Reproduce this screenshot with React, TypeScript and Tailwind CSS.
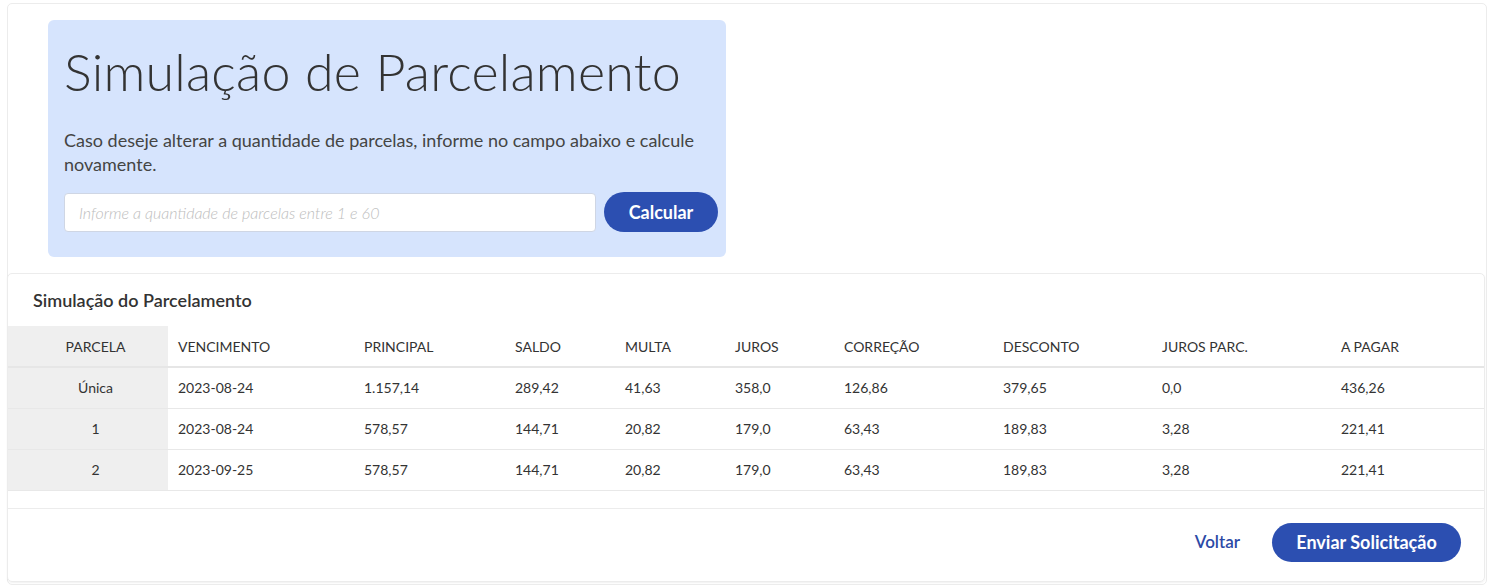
import React from 'react';

const rows = [
  ['Única', '2023-08-24', '1.157,14', '289,42', '41,63', '358,0', '126,86', '379,65', '0,0', '436,26'],
  ['1', '2023-08-24', '578,57', '144,71', '20,82', '179,0', '63,43', '189,83', '3,28', '221,41'],
  ['2', '2023-09-25', '578,57', '144,71', '20,82', '179,0', '63,43', '189,83', '3,28', '221,41'],
];

const heads = ['VENCIMENTO', 'PRINCIPAL', 'SALDO', 'MULTA', 'JUROS', 'CORREÇÃO', 'DESCONTO', 'JUROS PARC.', 'A PAGAR'];
const widths = ['w-[186px]', 'w-[151px]', 'w-[110px]', 'w-[110px]', 'w-[109px]', 'w-[159px]', 'w-[159px]', 'w-[179px]', 'w-[153px]'];

const App: React.FC = () => {
  return (
    <div className="min-h-screen bg-white text-[#333] font-['Lato',sans-serif] pt-[3px] pl-[7px]">
      <div className="w-[1480px] border border-[#ececec] rounded-[5px] pb-[2px]">
        <div className="pt-[16px] pl-[40px] pb-[16px]">
          <div className="w-[678px] h-[237px] bg-[#d6e4fd] rounded-[6px] pl-[16px] pr-[8px] pt-[20px]">
            <h1 className="text-[52px] font-light leading-[62px] tracking-[0.2px] text-[#333]">Simulação de Parcelamento</h1>
            <p className="mt-[26px] text-[18px] leading-[24px] text-[#444]">
              Caso deseje alterar a quantidade de parcelas, informe no campo abaixo e calcule novamente.
            </p>
            <div className="mt-[16px] flex items-center gap-[8px]">
              <input
                className="w-[532px] h-[39px] shrink-0 bg-white border border-[#cfd6e4] rounded-[4px] px-[14px] text-[16px] italic placeholder:text-[#bdbdbd] placeholder:font-light outline-none"
                placeholder="Informe a quantidade de parcelas entre 1 e 60"
              />
              <button className="w-[114px] h-[40px] shrink-0 rounded-full bg-[#2c4fb1] text-white text-[18px] font-bold">Calcular</button>
            </div>
          </div>
        </div>

        <div className="mr-[1px] -ml-px border border-[#ececec] rounded-[5px] shadow-[0_1px_2px_rgba(0,0,0,0.06)]">
          <div className="h-[52px] flex items-center pl-[25px] pt-[1px] text-[18px] font-semibold text-[#333]">Simulação do Parcelamento</div>
          <table className="table-fixed border-collapse text-[14px] text-[#333]">
            <thead>
              <tr className="h-[41px] border-b-2 border-[#e6e6e6]">
                <th className="w-[160px] bg-[#efefef] font-normal text-center pl-[15px]">PARCELA</th>
                {heads.map((h, i) => (
                  <th key={h} className={`${widths[i]} font-normal text-left pl-[10px]`}>{h}</th>
                ))}
              </tr>
            </thead>
            <tbody>
              {rows.map((r, ri) => (
                <tr key={ri} className="h-[41px] border-b border-[#e8e8e8]">
                  <td className="bg-[#efefef] text-center pl-[15px]">{r[0]}</td>
                  {r.slice(1).map((c, ci) => (
                    <td key={ci} className="pl-[10px]">{c}</td>
                  ))}
                </tr>
              ))}
            </tbody>
          </table>
          <div className="h-[17px]" />
          <div className="border-t border-[#ececec] h-[73px] flex items-start justify-end pt-[14px] pr-[23px] gap-[32px]">
            <button className="h-[39px] text-[17px] font-semibold text-[#2c4aa6]">Voltar</button>
            <button className="w-[189px] h-[39px] rounded-full bg-[#2c4fb1] text-white text-[18px] font-bold">Enviar Solicitação</button>
          </div>
        </div>
      </div>
    </div>
  );
};

export default App;
